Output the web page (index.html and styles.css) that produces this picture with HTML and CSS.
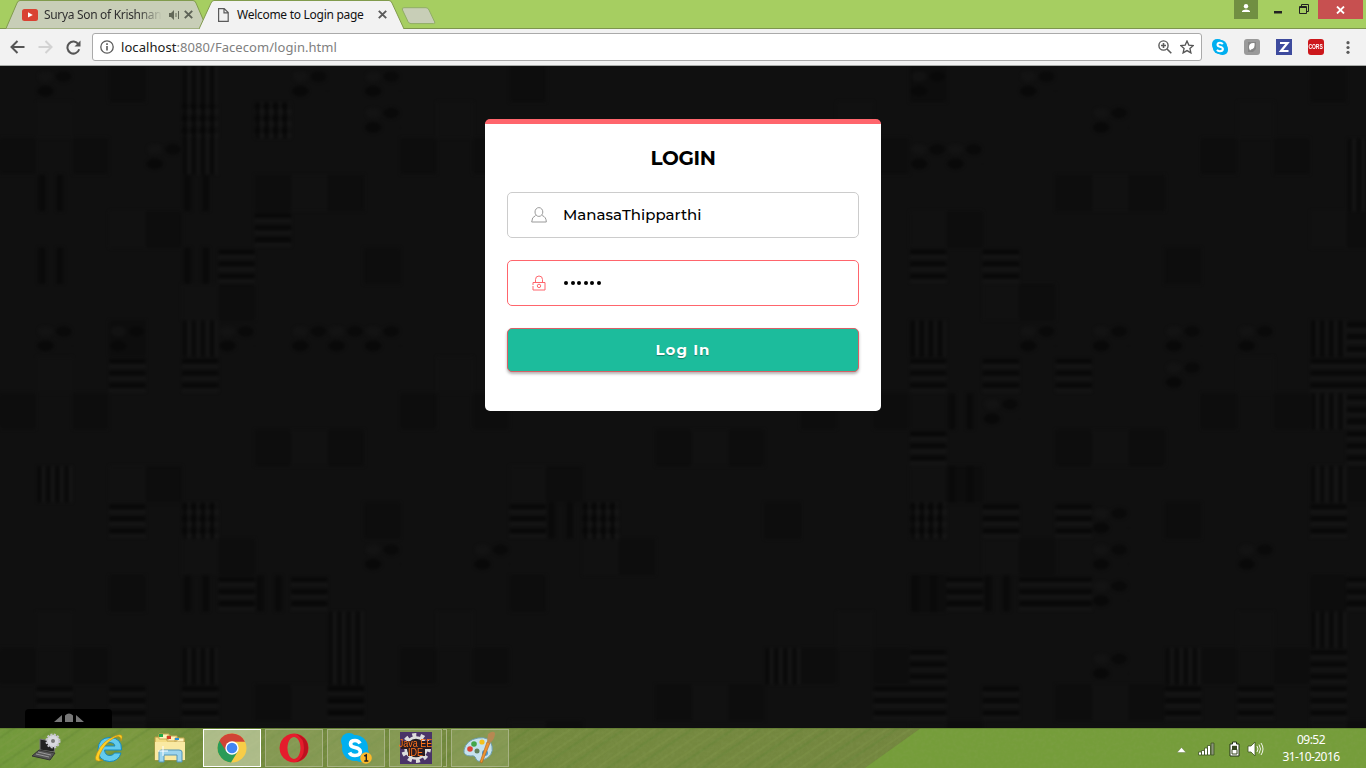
FILE: index.html
```html
<!DOCTYPE html>
<html lang="en">
<head>
<meta charset="utf-8">
<title>Welcome to Login page</title>
<link rel="stylesheet" href="styles.css">
</head>
<body>
<div class="screen">
  <header class="tabstrip">
    <div class="tab tab-back">
      <svg class="tab-shape" width="201" height="29" viewBox="0 0 201 29"><path d="M0 28.5 L11 3 Q12 .5 14 .5 H187 Q189 .5 190 3 L201 28.5" fill="#c8ceb7" stroke="#819b4d"/></svg>
      <svg class="youtube" width="16" height="12" viewBox="0 0 16 12"><rect width="16" height="12" rx="2.5" fill="#d94232"/><path d="M6 3.3v5.2L10.8 6z" fill="#fff"/></svg>
      <span class="tab-title fade">Surya Son of Krishnan</span>
      <svg class="sound" width="12" height="10" viewBox="0 0 12 10"><path d="M0 3h2l3-3v10L2 7H0z" fill="#626857"/><path d="M7 3v4M9.5 1v8" stroke="#626857"/></svg>
      <svg width="9" height="9" viewBox="0 0 9 9"><path d="M.8.8l7.4 7.4M8.2.8L.8 8.2" stroke="#5d6256" stroke-width="1.9"/></svg>
    </div>
    <div class="tab tab-front">
      <svg class="tab-shape" width="206" height="29" viewBox="0 0 206 29"><path d="M0 29 L12 3 Q13 .5 15 .5 H190 Q192 .5 193 3 L205 29" fill="#f2f2f2" stroke="#819b4d"/></svg>
      <svg class="page" width="11" height="14" viewBox="0 0 11 14"><path d="M.6.6h5.6l4 4v8.8H.6zM6 .6v4.2h4.2" fill="none" stroke="#5a5a5a" stroke-width="1.2"/></svg>
      <span class="tab-title">Welcome to Login page</span>
      <svg width="9" height="9" viewBox="0 0 9 9"><path d="M.8.8l7.4 7.4M8.2.8L.8 8.2" stroke="#5a5a5a" stroke-width="1.9"/></svg>
    </div>
    <svg class="newtab" width="36" height="18" viewBox="0 0 36 18"><path d="M3 .7H25Q27 .7 28 3l5.700 12q.7 1.600-1 1.600H10q-2 0-3-2L1.500 3Q.5.7 3 .7z" fill="#c8ceb7" stroke="#91ad67"/></svg>
    <div class="winbuttons">
      <div class="profile"><svg width="10" height="10" viewBox="0 0 10 10"><circle cx="5" cy="2.300" r="2.200" fill="#fff"/><path d="M1 8V7Q2 5.500 5 5.500T9 7V8z" fill="#fff"/></svg></div>
      <div class="wb min"><svg width="8" height="3"><path d="M0 0h8v2.500H0z" fill="#222"/></svg></div>
      <div class="wb max"><svg width="11" height="10" viewBox="0 0 11 10"><path d="M.5 2.500h7v7H.5zM0 3.500h8M2.500 2V.5h7v7H8" fill="none" stroke="#222"/></svg></div>
      <div class="wb close"><svg width="9" height="8" viewBox="0 0 9 8"><path d="M1 .5l7 7M8 .5l-7 7" stroke="#fff" stroke-width="1.800"/></svg></div>
    </div>
  </header>

  <div class="toolbar">
    <svg class="back" width="15" height="14" viewBox="0 0 15 14"><path d="M14.500 7H2M7.500 1L1.500 7l6 6" fill="none" stroke="#555" stroke-width="2"/></svg>
    <svg class="forward" width="15" height="14" viewBox="0 0 15 14"><path d="M.5 7H13M7.500 1l6 6-6 6" fill="none" stroke="#d2d2d2" stroke-width="2"/></svg>
    <svg class="reload" width="15" height="15" viewBox="0 0 15 15"><path d="M12.400 4.200A6 6 0 1 0 13.200 9.300" fill="none" stroke="#555" stroke-width="2"/><path d="M14.500.5v6h-6z" fill="#555"/></svg>
    <div class="address">
      <svg width="14" height="14" viewBox="0 0 14 14"><circle cx="7" cy="7" r="6.200" fill="none" stroke="#5a5a5a" stroke-width="1.300"/><path d="M7 6v4.500M7 3.300v1.700" stroke="#5a5a5a" stroke-width="1.600"/></svg>
      <span class="url"><b>localhost</b>:8080/Facecom/login.html</span>
      <svg class="magnify" width="14" height="14" viewBox="0 0 14 14"><circle cx="5.500" cy="5.500" r="4.600" fill="none" stroke="#5a5a5a" stroke-width="1.400"/><path d="M9 9l4.300 4.300M3 5.500h5M5.500 3v5" stroke="#5a5a5a" stroke-width="1.600"/></svg>
      <svg width="14" height="14" viewBox="0 0 14 14"><path d="M7 1l1.800 4.100 4.500.4-3.400 3 1 4.400L7 10.600l-3.900 2.300 1-4.400L.7 5.500l4.500-.4z" fill="none" stroke="#555" stroke-width="1.300"/></svg>
    </div>
    <svg class="ext" width="16" height="16" viewBox="0 0 16 16"><rect width="11" height="11" rx="5" fill="#00aff0"/><rect x="5" y="5" width="11" height="11" rx="5" fill="#00aff0"/><circle cx="8" cy="8" r="7.300" fill="#00aff0"/><path d="M10.800 5.200Q9.800 3.800 8 3.800 5.500 3.800 5.500 5.700 5.500 7.200 8 7.700 10.900 8.300 10.900 10.100 10.800 12.200 8 12.200 5.800 12.200 5 10.700" fill="none" stroke="#fff" stroke-width="2"/></svg>
    <svg class="ext" width="16" height="16" viewBox="0 0 16 16"><rect width="16" height="16" rx="3" fill="#9a9a9a"/><path d="M4 3h8v7l-3 3H4z" fill="#858585"/><path d="M10.500 4Q4.500 3.500 5 9l1 2.500 1-1Q11.500 9.500 10.500 4z" fill="#fff"/></svg>
    <svg class="ext" width="16" height="16" viewBox="0 0 16 16"><rect width="16" height="16" fill="#3e4b9e"/><path d="M4 4h7.500L5 12h7.500" fill="none" stroke="#fff" stroke-width="2.200"/></svg>
    <div class="cors"><span>CORS</span></div>
    <svg class="dots" width="4" height="13" viewBox="0 0 4 13"><g fill="#5a5a5a"><circle cx="2" cy="1.700" r="1.600"/><circle cx="2" cy="6.500" r="1.600"/><circle cx="2" cy="11.300" r="1.600"/></g></svg>
  </div>

  <main class="content">
    <svg class="weave" width="1366" height="662" viewBox="0 0 1366 662">
      <defs>
        <pattern id="h" width="1" height=".3333" patternUnits="userSpaceOnUse"><rect width="1" height=".12" y=".06" fill="#060606"/><rect width="1" height=".08" y=".22" fill="#171717"/></pattern>
        <pattern id="v" width=".25" height="1" patternUnits="userSpaceOnUse"><rect width=".1" height="1" x=".03" fill="#070707"/><rect width=".07" height="1" x=".16" fill="#181818"/></pattern>
        <pattern id="w" width=".5" height="1" patternUnits="userSpaceOnUse"><rect width=".2" height="1" x=".05" fill="#090909"/></pattern>
        <pattern id="o" width="1" height="1" patternUnits="userSpaceOnUse"><ellipse cx=".25" cy=".7" rx=".23" ry=".15" fill="#070707"/><ellipse cx=".75" cy=".3" rx=".22" ry=".15" fill="#080808"/><ellipse cx=".25" cy=".3" rx=".2" ry=".14" fill="#141414"/></pattern>
        <pattern id="base" width="11" height="7" patternUnits="userSpaceOnUse"><path d="M0 2h.98v.98H0zM2 2h.98v.98H2zM4 4h1v1H4zM7 3h1v1H7zM9 3h1v1H9zM10 5h1v1h-1zM3 0h1v1H3zM6 6h1v1H6z" fill="#0d0d0d"/><path d="M1 1h1v1H1zM8 3h1v1H8zM5 6h1v1H5zM3 4h1v1H3z" fill="#111"/></pattern>
        <filter id="soft" filterUnits="userSpaceOnUse" x="0" y="0" width="1366" height="662" color-interpolation-filters="sRGB"><feGaussianBlur stdDeviation="1.600"/></filter>
      </defs>
      <rect width="1366" height="662" fill="#101010"/>
      <g filter="url(#soft)">
        <g transform="translate(0 -.4) scale(36.400)">
          <rect width="38" height="19" fill="url(#base)"/>
          <path fill="url(#h)" opacity=".8" d="M5 1h1v1h-1zM7 1h1v1h-1zM7 4h1v1h-1zM6 5h1v1h-1zM3 8h1v1h-1zM5 8h1v1h-1zM37 7h1v4h-1zM25 8h1v1h-1zM27 8h1v1h-1zM29 8h1v1h-1zM36 8h1v1h-1zM25 10h1v1h-1zM25 12h1v1h-1zM27 12h1v1h-1zM29 12h1v1h-1zM36 12h1v1h-1zM3 12h1v1h-1zM5 12h1v1h-1zM14 12h1v1h-1zM16 12h1v1h-1zM26 14h1v1h-1zM28 14h2v1h-2zM37 14h1v1h-1zM6 14h1v1h-1zM8 14h1v1h-1zM25 16h1v2h-1zM36 16h1v2h-1zM27 17h1v1h-1zM32 17h1v1h-1zM34 17h1v1h-1zM24 17h1v1h-1zM1 17h1v1h-1zM3 17h1v1h-1zM5 17h1v1h-1zM9 17h1v1h-1zM25 5h1v1h-1zM27 5h1v1h-1z"/>
          <path fill="url(#v)" opacity=".8" d="M5 0h1v3h-1zM7 1h1v1h-1zM5 7h1v1h-1zM25 7h1v1h-1zM36 7h1v1h-1zM36 9h1v1h-1zM36 11h1v1h-1zM25 12h1v1h-1zM1 11h1v1h-1zM5 12h1v1h-1zM16 12h1v1h-1zM36 15h1v1h-1zM32 16h1v1h-1zM21 16h1v1h-1zM9 15h1v2h-1zM5 16h1v1h-1zM37 2h1v2h-1z"/>
          <path fill="url(#w)" opacity=".8" d="M5 3h1v1h-1zM5 5h1v1h-1zM1 3h1v1h-1zM1 5h1v1h-1zM26 9h1v1h-1zM26 11h1v1h-1zM25 14h1v1h-1zM27 14h1v1h-1zM5 14h1v1h-1zM7 14h1v1h-1zM15 12h1v1h-1z"/>
          <path fill="url(#o)" opacity=".75" d="M1 0h1v1h-1zM10 0h1v1h-1zM4 2h1v1h-1zM8 0h1v1h-1zM10 1h1v1h-1zM1 7h1v1h-1zM3 7h1v1h-1zM6 7h1v1h-1zM8 7h3v1h-3zM28 7h1v1h-1zM30 7h1v1h-1zM32 7h1v2h-1zM34 7h1v1h-1zM27 9h1v1h-1zM30 12h1v3h-1zM34 13h1v1h-1zM30 16h1v1h-1zM25 0h1v1h-1zM28 0h1v1h-1zM25 2h2v1h-2zM30 1h1v1h-1zM13 13h1v1h-1zM10 13h1v1h-1z"/>
        </g>
      </g>
    </svg>
    <form class="login">
      <h1>LOGIN</h1>
      <div class="field">
        <svg width="16" height="16" viewBox="0 0 16 16" fill="none" stroke="#999"><ellipse cx="7.900" cy="5" rx="3.900" ry="4.400"/><path d="M4.600 8.500Q.7 10 .7 15H15.300Q15.300 10 11.200 8.500"/></svg>
        <span class="value">ManasaThipparthi</span>
      </div>
      <div class="field active">
        <svg width="16" height="16" viewBox="0 0 16 16" fill="none" stroke="#ff656c"><path d="M4.500 7V4.500Q4.500 1 8 1T11.500 4.500V7M2 10V7.500H14V15H2V11"/><circle cx="8" cy="10.900" r="1.700"/></svg>
        <span class="dots-value"><i></i><i></i><i></i><i></i><i></i><i></i></span>
      </div>
      <div class="submit">Log In</div>
    </form>
    <div class="dock"><svg width="30" height="10" viewBox="0 0 30 10"><path d="M0 9h8V2zM11 9V2.500Q15-1.500 19 2.500V9zM22 9h8l-8-7z" fill="#777"/></svg></div>
  </main>

  <footer class="taskbar">
    <svg class="grass" width="1366" height="40" viewBox="0 0 1366 40">
      <defs>
        <linearGradient id="ground"><stop offset="0" stop-color="#71993a"/><stop offset=".1" stop-color="#7b993f"/><stop offset=".16" stop-color="#728a3d"/><stop offset=".5" stop-color="#74883f"/><stop offset="1" stop-color="#70803d"/></linearGradient>
        <pattern id="furrow" width="76" height="38" patternUnits="userSpaceOnUse" patternTransform="rotate(-34)"><path d="M0 3h76M0 16h76M0 25h76" stroke="#8a9d50" stroke-width="1.500" opacity=".25"/><path d="M0 8h76M0 31h76" stroke="#5c8031" stroke-width="2.500" opacity=".3"/></pattern>
        <filter id="grain" x="0" y="0" width="1" height="1"><feTurbulence type="fractalNoise" baseFrequency=".28" numOctaves="2"/><feColorMatrix values="0 0 0 0 .28 0 0 0 0 .37 0 0 0 0 .12 .9 0 0 0 -.3"/></filter>
      </defs>
      <rect width="1366" height="40" fill="url(#ground)"/><rect width="925" height="40" fill="url(#furrow)"/>
      <path d="M921 0H1366V40H865z" fill="#759d3a"/>
      <rect width="1366" height="40" filter="url(#grain)" opacity=".35"/><path d="M0 .5H1366" stroke="#56742b" opacity=".5"/>
    </svg>
    <div class="task"><svg width="34" height="32" viewBox="0 0 34 32"><path d="M10 7l16 3-2 10-14-2z" fill="#222" stroke="#777"/><path d="M9 18l16 3-5 7L2 24z" fill="#555" stroke="#333"/><path d="M8 20l13 3M6 22l13 3" stroke="#999"/><circle cx="23" cy="9" r="6.300" fill="#d9d9df" stroke="#c5c5cd" stroke-width="2.500" stroke-dasharray="2 1.300"/><circle cx="23" cy="9" r="2" fill="#777"/></svg></div>
    <div class="task"><svg width="34" height="34" viewBox="0 0 34 34"><path fill-rule="evenodd" d="M29.500 19H12.500Q13 24.500 18 24.500 21 24.500 22.500 22H29Q26.500 30.500 17.500 30.500 6 30 6 18.500 6.500 6.500 18 6.500 30 7 29.500 19zM12.700 15H23Q22.500 11.500 18 11.500 13.500 11.500 12.700 15z" fill="#63cbed" stroke="#168ac0"/><path d="M29 10q4-9-6-5Q10 10 5 22q-5 11 6 7-6 1-3-6Q13 12 22 7q7-4 7 3z" fill="#ffcf23" stroke="#c28b10" stroke-width=".6"/></svg></div>
    <div class="task"><svg width="34" height="32" viewBox="0 0 34 32"><path d="M1 5h9l2 2h18v21H1z" fill="#f3dc83" stroke="#b99943"/><path d="M5 2h10v5H5zM13 4h10v5H13zM21 6h9v4h-9z" fill="#fff2bb" stroke="#c6a955"/><path d="M5 2h4v3H5z" fill="#24a948"/><path d="M13 4h4v3h-4z" fill="#d83f26"/><path d="M21 6h4v2h-4z" fill="#2e91d5"/><path d="M1 10h30v18H1z" fill="#f9e9a2"/><path d="M5 30V20q0-2 3-2h17q3 0 3 2v10h-5v-7H10v7z" fill="#9cd4ed" stroke="#5294b5"/><path d="M9 14v10M4 19h10" stroke="#fff"/></svg></div>
    <div class="task boxed current"><svg width="30" height="30" viewBox="0 0 30 30"><circle cx="15" cy="15" r="14.500" fill="#f7cd48"/><path d="M15 15L2.400 7.800A14.500 14.500 0 0 0 14 29.500L21 18z" fill="#2a9b58"/><path d="M2.400 7.800A14.500 14.500 0 0 1 28 8.800H15L9 18z" fill="#d14336"/><circle cx="15" cy="15" r="6.700" fill="#fff"/><circle cx="15" cy="15" r="5.300" fill="#4285f4"/></svg></div>
    <div class="task boxed"><svg width="30" height="30" viewBox="0 0 30 30"><path fill-rule="evenodd" d="M15 .5a14.500 14.500 0 1 0 .1 0zM15 4a6.500 11 0 1 1-.1 0z" fill="#e51c2c"/><path d="M17 1q12 3 12 14T17 29q8-4 8-14T17 1z" fill="#a60c18" opacity=".65"/></svg></div>
    <div class="task boxed skype"><svg width="32" height="34" viewBox="0 0 32 34"><circle cx="9" cy="10" r="8" fill="#00aff0"/><circle cx="15" cy="17" r="13" fill="#00aff0"/><circle cx="21" cy="23" r="8" fill="#00aff0"/><path d="M20 12.500Q18.500 9.500 15 9.500 10.500 9.500 10.500 13 10.500 15.700 15 16.600 20.300 17.600 20.300 20.800 20.200 24.500 15 24.500 10.700 24.500 9.500 21.500" fill="none" stroke="#fff" stroke-width="3.600"/><circle cx="26" cy="27" r="5.800" fill="#fdb92a"/><path d="M24.300 25l2-1v6m-2 0h4" fill="none" stroke="#222" stroke-width="1.400"/></svg></div>
    <div class="task boxed java"><svg width="32" height="32" viewBox="0 0 32 32"><rect width="32" height="32" fill="#4a3468"/><circle cx="16" cy="16" r="10.500" fill="#221d22" stroke="#ddd" stroke-width="2.500"/><circle cx="16" cy="16" r="13" fill="none" stroke="#ddd" stroke-width="4" stroke-dasharray="4 4.170"/><path d="M1 9h30v8H25v7H8v-7H1z" fill="#2a1c22"/></svg><span>Java EE<br>IDE</span></div>
    <div class="stack"></div>
    <div class="task boxed paint"><svg width="34" height="34" viewBox="0 0 34 34"><path d="M1 19Q3 9 15 7t14 8-9 14q-5 3-7-1-1-4-5-3-8 0-7-6z" fill="#c5e2ee" stroke="#6c9dae"/><circle cx="7" cy="18" r="2.800" fill="#df4333"/><circle cx="11" cy="13" r="2.800" fill="#43a649"/><circle cx="19" cy="11" r="2.600" fill="#f3c11c"/><circle cx="14" cy="20" r="2.500" fill="#607f58"/><circle cx="22" cy="22" r="3" fill="#4c9ad1"/><path d="M17 31l7-20 3 1-8 20z" fill="#ef9431" stroke="#a76024" stroke-width=".6"/><path d="M24 11L25 3q5-4 7-1 0 6-5 10z" fill="#b78852"/></svg></div>
    <div class="tray">
      <svg class="up" width="9" height="6" viewBox="0 0 9 6"><path d="M0 5.500L4.500.5 9 5.500z" fill="#fff" stroke="#556b35" stroke-width=".4"/></svg>
      <svg class="signal" width="17" height="14" viewBox="0 0 17 14"><g fill="#fff" stroke="#3e5422" stroke-width=".8"><path d="M.5 10h3v3h-3zM3.500 8.500h3V13h-3zM6.500 6h3v7h-3zM9.500 3.500h3V13h-3z"/><path d="M13 1h3v12h-3z" fill="#899379"/></g></svg>
      <svg class="battery" width="11" height="16" viewBox="0 0 11 16"><path d="M3.500 1h4v2H10v12H1V3h2.500z" fill="#fff" stroke="#26321a"/><path d="M3 4.800h5V8H3z" fill="#35451f"/><path d="M3 8.500h5V13H3z" fill="#fff" stroke="#35451f"/></svg>
      <svg class="volume" width="18" height="16" viewBox="0 0 18 16"><path d="M1 5h3l4-4v14l-4-4H1z" fill="#fff" stroke="#3e5422" stroke-width=".8"/><path d="M10 5q2 3 0 6M12 3.500q3 4.500 0 9M14 2q4 6 0 12" fill="none" stroke="#f2f5ed"/></svg>
      <div class="clock"><span>09:52</span><span>31-10-2016</span></div>
    </div>
  </footer>
</div>
</body>
</html>
```
FILE: styles.css
```css
* { box-sizing: border-box; }
body { margin: 0; overflow: hidden; font-family: "Noto Sans", sans-serif; }
svg { display: block; flex: none; }
.screen { width: 1366px; height: 768px; display: flex; flex-direction: column; }

.tabstrip { height: 29px; flex: none; display: flex; background: #a6ce61; border-bottom: 1px solid #7d954d; }
.tab { position: relative; display: flex; align-items: center; height: 29px; font-size: 12px; color: #303030; }
.tab > * { position: relative; }
.tab-back { width: 193px; margin-left: 6px; padding-left: 16px; }
.tab-front { width: 206px; padding-left: 19px; z-index: 1; }
.tab > .tab-shape { position: absolute; left: 0; top: 0; }
.tab-title { white-space: nowrap; line-height: 28px; }
.tab-back .tab-title { width: 118px; margin: 0 7px 0 6px; overflow: hidden; letter-spacing: -.32px; }
.fade { -webkit-mask-image: linear-gradient(90deg, #000 80%, transparent); mask-image: linear-gradient(90deg, #000 80%, transparent); }
.sound { margin-right: 3px; }
.tab-front .tab-title { width: 130px; margin: 0 11px 0 8px; color: #111; letter-spacing: -.28px; }
.newtab { margin: 7px 0 0 -4px; }
.winbuttons { display: flex; margin-left: auto; height: 19px; }
.profile { width: 24px; background: #718f42; display: flex; justify-content: center; padding-top: 4px; margin-right: 16px; }
.wb { display: flex; align-items: flex-start; }
.min { width: 25px; padding-top: 11px; }
.max { width: 19px; padding-top: 4px; }
.close { width: 45px; margin-right: 3px; background: #c75050; justify-content: center; padding-top: 6px; }

.toolbar { height: 37px; flex: none; display: flex; align-items: center; background: #f2f2f2; border-bottom: 1px solid #a9aca9; padding: 0 15px 0 10px; }
.forward { margin-left: 13px; }
.reload { margin-left: 13px; }
.address { width: 1110px; height: 28px; margin: 0 10px 0 11px; display: flex; align-items: center; background: #fff; border: 1px solid #aaa; border-radius: 3px; padding: 0 7px; }
.url { margin-left: 7px; font-size: 13px; color: #808080; line-height: 24px; letter-spacing: .06px; }
.url b { color: #202020; font-weight: 400; }
.magnify { margin: 0 8px 0 auto; }
.ext { margin-right: 16px; }
.cors { width: 16px; height: 16px; border-radius: 3px; background: #cc171b; color: #fff; font: bold 8px/16px "Liberation Sans", sans-serif; display: flex; justify-content: center; }
.cors span { transform: scaleX(.62); }
.dots { margin-left: 22px; }

.content { position: relative; flex: 1; display: flex; justify-content: center; align-items: flex-start; padding-top: 53px; background: #101010; }
.weave { position: absolute; inset: 0; }
.login { position: relative; width: 396px; height: 292px; padding: 19px 22px 0; background: #fff; border-top: 5px solid #ff656c; border-radius: 5px; font-family: Montserrat, Lato, sans-serif; color: #000; }
h1 { margin: 0 0 19px; font-size: 20px; line-height: 30px; text-align: center; font-weight: 700; letter-spacing: -.4px; }
.field { height: 46px; display: flex; align-items: center; padding-left: 23px; margin-bottom: 22px; border: 1px solid #ccc; border-radius: 5px; }
.field.active { border-color: #ff656c; }
.value { margin: -2px 0 0 16px; font-size: 15px; letter-spacing: 0; font-weight: 500; }
.dots-value { display: flex; gap: 2.600px; margin-left: 17px; }
.dots-value i { width: 4px; height: 4px; border-radius: 50%; background: #000; }
.submit { height: 44px; line-height: 42px; text-align: center; color: #fff; background: #1cbc9c; border: 1px solid #d95f65; border-radius: 5px; font-size: 15px; font-weight: 700; letter-spacing: 1px; text-shadow: 0 1px 1px #147e68; box-shadow: 0 2px 3px rgba(0,0,0,.3); }
.dock { position: absolute; left: 25px; bottom: 0; width: 87px; height: 19px; background: #000; border-radius: 4px 4px 0 0; display: flex; justify-content: center; padding-top: 4px; }

.taskbar { position: relative; height: 40px; flex: none; display: flex; align-items: center; padding-left: 16px; }
.grass { position: absolute; left: 0; top: 0; }
.task { position: relative; width: 62px; height: 38px; display: flex; justify-content: center; align-items: center; }
.boxed { width: 58px; margin-right: 4px; border: 1px solid #a7b283; background: rgba(160,175,115,.4); }
.current { margin-left: 1px; border-color: #fff; background: rgba(205,213,176,.65); }
.java { width: 53px; margin-right: 1px; }
.java span { position: absolute; inset: 9px -8px 0; text-align: center; color: #ff741b; font: 10px/9px "Liberation Sans", sans-serif; transform: scaleX(.9); white-space: nowrap; }
.stack { position: relative; width: 4px; height: 38px; border: 1px solid #a7b283; border-left: 0; margin-right: 4px; }
.tray { position: relative; margin-left: auto; display: flex; align-items: center; padding-right: 25px; }
.up { margin: 3px 12px 0 0; }
.signal { margin: 2px 14px 0 0; }
.battery { margin: 2px 7px 0 0; }
.volume { margin-top: 2px; }
.clock { display: flex; flex-direction: column; align-items: center; width: 60px; margin-left: 16px; font-size: 12px; line-height: 17px; letter-spacing: -.55px; color: #fff; white-space: nowrap; }
```
